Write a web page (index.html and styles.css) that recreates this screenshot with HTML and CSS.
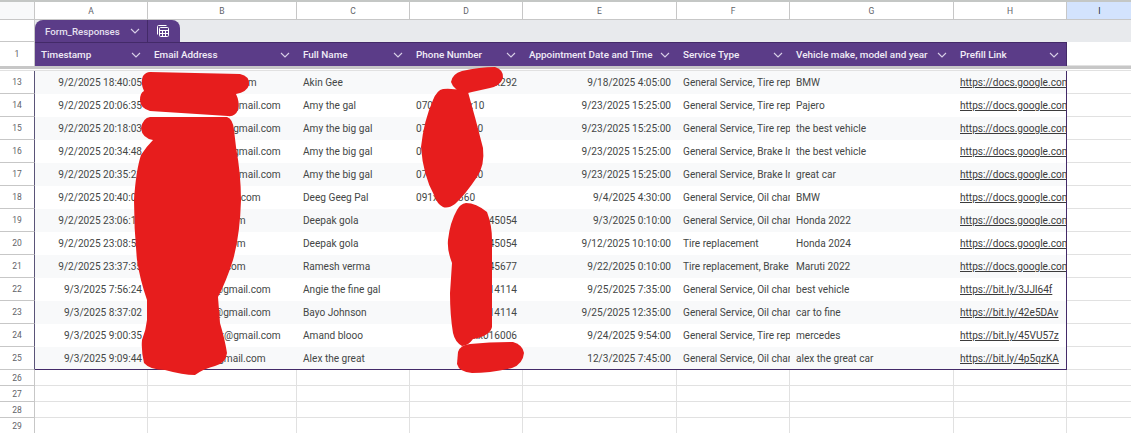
FILE: index.html
```html
<!DOCTYPE html>
<html lang="en">
<head>
<meta charset="utf-8">
<title>Form_Responses</title>
<link rel="stylesheet" href="styles.css">
</head>
<body>
<svg class="defs" width="0" height="0" aria-hidden="true">
  <symbol id="chev" viewBox="0 0 10 6"><path d="M1 1l4 4 4-4" fill="none" stroke="currentColor" stroke-width="1.1"/></symbol>
</svg>
<div class="sheet">
  <div class="topbar"></div>
  <div class="row colhead">
    <div class="corner"></div>
    <div>A</div><div>B</div><div>C</div><div>D</div><div>E</div><div>F</div><div>G</div><div>H</div><div class="sel">I</div>
  </div>
  <div class="tabrow">
    <div class="rowhead blank"></div>
    <div class="tab">
      <div class="tabname">Form_Responses <svg class="chev"><use href="#chev"/></svg></div>
      <div class="tabicon">
        <svg width="14" height="14" viewBox="0 0 14 14" fill="none" stroke="#fff" stroke-width="1">
          <path d="M10.5 1.5h-8a1 1 0 0 0-1 1v8"/>
          <rect x="3.5" y="3.5" width="9" height="9" rx="1"/>
          <path d="M3.5 6.5h9M3.5 9.5h9M6.5 6.5v6M9.5 6.5v6"/>
        </svg>
      </div>
    </div>
  </div>
  <div class="row thead">
    <div class="rowhead">1</div>
    <div class="th"><span>Timestamp</span><svg class="chev"><use href="#chev"/></svg></div>
    <div class="th"><span>Email Address</span><svg class="chev"><use href="#chev"/></svg></div>
    <div class="th"><span>Full Name</span><svg class="chev"><use href="#chev"/></svg></div>
    <div class="th"><span>Phone Number</span><svg class="chev"><use href="#chev"/></svg></div>
    <div class="th"><span>Appointment Date and Time</span><svg class="chev"><use href="#chev"/></svg></div>
    <div class="th"><span>Service Type</span><svg class="chev"><use href="#chev"/></svg></div>
    <div class="th"><span>Vehicle make, model and year</span><svg class="chev"><use href="#chev"/></svg></div>
    <div class="th"><span>Prefill Link</span><svg class="chev"><use href="#chev"/></svg></div>
    <div class="free"></div>
  </div>
  <div class="freeze"></div>
  <div class="gap"></div>

  <div class="row data alt"><div class="rowhead">13</div><div class="r">9/2/2025 18:40:05</div><div>xxxxxxxxxxxxxxxx.com</div><div>Akin Gee</div><div class="r">xxxxxxxxx292</div><div class="r">9/18/2025 4:05:00</div><div>General Service, Tire replacement</div><div>BMW</div><div class="lnk"><a>https://docs.google.com/forms/d/e/prefill</a></div><div class="free"></div></div>
  <div class="row data"><div class="rowhead">14</div><div class="r">9/2/2025 20:06:35</div><div>xxxxxxxxxxxxxx@gmail.com</div><div>Amy the gal</div><div>070xxxxxxxx10</div><div class="r">9/23/2025 15:25:00</div><div>General Service, Tire replacement</div><div>Pajero</div><div class="lnk"><a>https://docs.google.com/forms/d/e/prefill</a></div><div class="free"></div></div>
  <div class="row data alt"><div class="rowhead">15</div><div class="r">9/2/2025 20:18:03</div><div>xxxxxxxxxxxxxx@gmail.com</div><div>Amy the big gal</div><div>07xxxxxxxxxx0</div><div class="r">9/23/2025 15:25:00</div><div>General Service, Tire replacement</div><div>the best vehicle</div><div class="lnk"><a>https://docs.google.com/forms/d/e/prefill</a></div><div class="free"></div></div>
  <div class="row data"><div class="rowhead">16</div><div class="r">9/2/2025 20:34:48</div><div>xxxxxxxxxxxxxx@gmail.com</div><div>Amy the big gal</div><div>0xxxxxxxxxx0</div><div class="r">9/23/2025 15:25:00</div><div>General Service, Brake Inspection</div><div>the best vehicle</div><div class="lnk"><a>https://docs.google.com/forms/d/e/prefill</a></div><div class="free"></div></div>
  <div class="row data alt"><div class="rowhead">17</div><div class="r">9/2/2025 20:35:21</div><div>xxxxxxxxxxxxxx@gmail.com</div><div>Amy the big gal</div><div>07xxxxxxxxxx0</div><div class="r">9/23/2025 15:25:00</div><div>General Service, Brake Inspection</div><div>great car</div><div class="lnk"><a>https://docs.google.com/forms/d/e/prefill</a></div><div class="free"></div></div>
  <div class="row data"><div class="rowhead">18</div><div class="r">9/2/2025 20:40:05</div><div>xxxxxxxxxx@gmail.com</div><div>Deeg Geeg Pal</div><div>091xxxxx360</div><div class="r">9/4/2025 4:30:00</div><div>General Service, Oil change</div><div>BMW</div><div class="lnk"><a>https://docs.google.com/forms/d/e/prefill</a></div><div class="free"></div></div>
  <div class="row data alt"><div class="rowhead">19</div><div class="r">9/2/2025 23:06:15</div><div>xxxxxxx@gmail.com</div><div>Deepak gola</div><div class="r">xxxxx45054</div><div class="r">9/3/2025 0:10:00</div><div>General Service, Oil change</div><div>Honda 2022</div><div class="lnk"><a>https://docs.google.com/forms/d/e/prefill</a></div><div class="free"></div></div>
  <div class="row data"><div class="rowhead">20</div><div class="r">9/2/2025 23:08:55</div><div>xxxxxxx@gmail.com</div><div>Deepak gola</div><div class="r">xxxxx45054</div><div class="r">9/12/2025 10:10:00</div><div>Tire replacement</div><div>Honda 2024</div><div class="lnk"><a>https://docs.google.com/forms/d/e/prefill</a></div><div class="free"></div></div>
  <div class="row data alt"><div class="rowhead">21</div><div class="r">9/2/2025 23:37:35</div><div>xxxxxxx@gmail.com</div><div>Ramesh verma</div><div class="r">xxxxx45677</div><div class="r">9/22/2025 0:10:00</div><div>Tire replacement, Brake Inspection</div><div>Maruti 2022</div><div class="lnk"><a>https://docs.google.com/forms/d/e/prefill</a></div><div class="free"></div></div>
  <div class="row data"><div class="rowhead">22</div><div class="r">9/3/2025 7:56:24</div><div>xxxxxxxxxxxx@gmail.com</div><div>Angie the fine gal</div><div class="r">xxxxx14114</div><div class="r">9/25/2025 7:35:00</div><div>General Service, Oil change</div><div>best vehicle</div><div class="lnk"><a>https://bit.ly/3JJl64f</a></div><div class="free"></div></div>
  <div class="row data alt"><div class="rowhead">23</div><div class="r">9/3/2025 8:37:02</div><div>xxxxxxxxxxxx@gmail.com</div><div>Bayo Johnson</div><div class="r">xxxxx14114</div><div class="r">9/25/2025 12:35:00</div><div>General Service, Oil change</div><div>car to fine</div><div class="lnk"><a>https://bit.ly/42e5DAv</a></div><div class="free"></div></div>
  <div class="row data"><div class="rowhead">24</div><div class="r">9/3/2025 9:00:35</div><div>xxxxxxxxxxxxxx@gmail.com</div><div>Amand blooo</div><div class="r">xxxx016006</div><div class="r">9/24/2025 9:54:00</div><div>General Service, Tire replacement</div><div>mercedes</div><div class="lnk"><a>https://bit.ly/45VU57z</a></div><div class="free"></div></div>
  <div class="row data alt last"><div class="rowhead">25</div><div class="r">9/3/2025 9:09:44</div><div>xxxxxxxxxxx@gmail.com</div><div>Alex the great</div><div class="r">xxxxxxxxxx</div><div class="r">12/3/2025 7:45:00</div><div>General Service, Oil change</div><div>alex the great car</div><div class="lnk"><a>https://bit.ly/4p5qzKA</a></div><div class="free"></div></div>

  <div class="row empty"><div class="rowhead">26</div><div></div><div></div><div></div><div></div><div></div><div></div><div></div><div></div><div></div></div>
  <div class="row empty"><div class="rowhead">27</div><div></div><div></div><div></div><div></div><div></div><div></div><div></div><div></div><div></div></div>
  <div class="row empty"><div class="rowhead">28</div><div></div><div></div><div></div><div></div><div></div><div></div><div></div><div></div><div></div></div>
  <div class="row empty"><div class="rowhead">29</div><div></div><div></div><div></div><div></div><div></div><div></div><div></div><div></div><div></div></div>
</div>
<svg class="redact" width="1131" height="433" viewBox="0 0 1131 433" aria-hidden="true">
  <path d="M150 72L240 74Q250 76 249 85Q247 92 236 94Q240 102 238 110Q235 117 228 116L150 111Q140 108 140 100Q140 93 144 91Q140 82 143 76Q146 72 150 72Z"/>
  <path d="M150 117L227 117Q233 119 234 130L236 147Q241 175 241 200Q240 235 233 260Q226 282 218 297L220 323Q225 340 227 353Q226 363 215 366Q203 369 195 375Q183 375 165 370Q150 370 144 363Q141 350 142 340Q146 330 147 320L147 300Q140 280 137 260Q134 230 134 200Q136 170 141 155Q146 147 153 140Q142 138 141 128Q143 118 150 117Z"/>
  <path d="M451 82Q452 74 462 71Q480 67 495 67Q504 70 503 78Q500 86 490 88L472 92L468 93Q454 92 451 82Z"/>
  <path d="M443 89Q455 88 468 92Q476 120 483 148Q485 165 477 177Q465 195 455 204Q448 209 443 207Q437 204 434 195Q423 175 421 147Q424 120 433 100Q437 90 443 89Z"/>
  <path d="M466 203Q476 203 487 212Q492 225 492 240L492 327Q490 336 473 339Q468 346 462 346Q455 342 453 333Q450 315 450 293L452 263Q447 250 448 240Q450 222 457 210Q460 204 466 203Z"/>
  <path d="M458 352Q460 345 470 344Q490 342 513 342Q523 345 524 353Q523 364 512 368Q490 373 472 373Q459 372 457 364Z"/>
</svg>
</body>
</html>
```

FILE: styles.css
```css
* { box-sizing: border-box; }

html, body {
  margin: 0;
  height: 433px;
  overflow: hidden;
  background: #fff;
}

body {
  position: relative;
  font-family: Roboto, "Liberation Sans", sans-serif;
  font-size: 10.1px;
  color: #444746;
}

.defs { position: absolute; }

.sheet { width: 1131px; }

.topbar { height: 2px; background: #c4c7c5; }

.row {
  display: grid;
  grid-template-columns: 35px 113px 149px 113px 113px 154px 113px 164px 113px 65px;
}

.colhead {
  height: 18px;
  border-bottom: 1px solid #c7c7c7;
}

.colhead > div {
  display: flex;
  align-items: center;
  justify-content: center;
  border-right: 1px solid #c7c7c7;
  font-size: 8.5px;
  color: #5f6368;
}

.colhead .corner { background: #f8f9fa; }
.colhead .sel { background: #d3e3fd; border-right: 0; color: #1f1f1f; }

.tabrow {
  display: flex;
  height: 22px;
  background: #e8eaed;
}

.rowhead {
  display: flex;
  align-items: center;
  justify-content: center;
  background: #fff;
  border-right: 1px solid #c7c7c7;
  border-bottom: 1px solid #c7c7c7;
  font-size: 8.5px;
  color: #5f6368;
}

.rowhead.blank { width: 35px; flex: none; }

.tab {
  display: flex;
  width: 145px;
  background: #5b3c88;
  color: #fff;
  border-radius: 8px 8px 0 0;
  font-weight: 500;
  font-size: 9.7px;
}

.tabname {
  display: flex;
  align-items: center;
  justify-content: space-between;
  width: 113px;
  padding: 0 7px 0 10px;
  border-right: 1px solid #432a68;
  color: #e6e0f0;
}

.tabicon {
  flex: 1;
  display: flex;
  align-items: center;
  justify-content: center;
  padding-right: 3px;
}

.chev { width: 10px; height: 6px; flex: none; color: #d9d0e8; }

.thead { height: 24px; }

.th {
  display: flex;
  align-items: center;
  justify-content: space-between;
  gap: 4px;
  padding: 0 7px 0 6px;
  background: #5b3c88;
  color: #f1ecf7;
  font-weight: 500;
  font-size: 9.9px;
  white-space: nowrap;
  overflow: hidden;
  border-top: 1px solid #432a68;
}

.thead .th:nth-child(9) { border-right: 1px solid #432a68; }

.thead .rowhead { border-bottom: 0; }

.free { background: #fff; border-bottom: 1px solid #e1e1e1; }

.freeze { height: 3px; background: #c7c7c7; }

.gap { height: 2px; border-bottom: 1px solid #e1e1e1; }

.data { height: 23px; }

.data > div {
  display: flex;
  align-items: center;
  padding: 0 6px;
  white-space: nowrap;
  overflow: hidden;
  background: #fff;
}

.data > .rowhead {
  justify-content: center;
  padding: 0;
  background: #fff;
  border-right: 1px solid #5a5478;
}

.data.alt > div:not(.rowhead):not(.free) { background: #f8f9fa; }

.data > .r { justify-content: flex-end; }

.data > .lnk {
  padding-right: 0;
  border-right: 1px solid #432a68;
}

.lnk a {
  color: #3c3c3c;
  text-decoration: underline;
}

.data > .free { background: #fff; border-bottom: 1px solid #e1e1e1; }

.last > div:not(.rowhead):not(.free) { border-bottom: 1px solid #432a68; }

.empty { height: 16px; }

.empty > div {
  border-right: 1px solid #e1e1e1;
  border-bottom: 1px solid #e1e1e1;
}

.empty > .rowhead {
  border-right: 1px solid #c7c7c7;
  border-bottom: 1px solid #c7c7c7;
}

.redact {
  position: absolute;
  left: 0;
  top: 0;
  pointer-events: none;
}

.redact path { fill: #e71d1d; }
```
